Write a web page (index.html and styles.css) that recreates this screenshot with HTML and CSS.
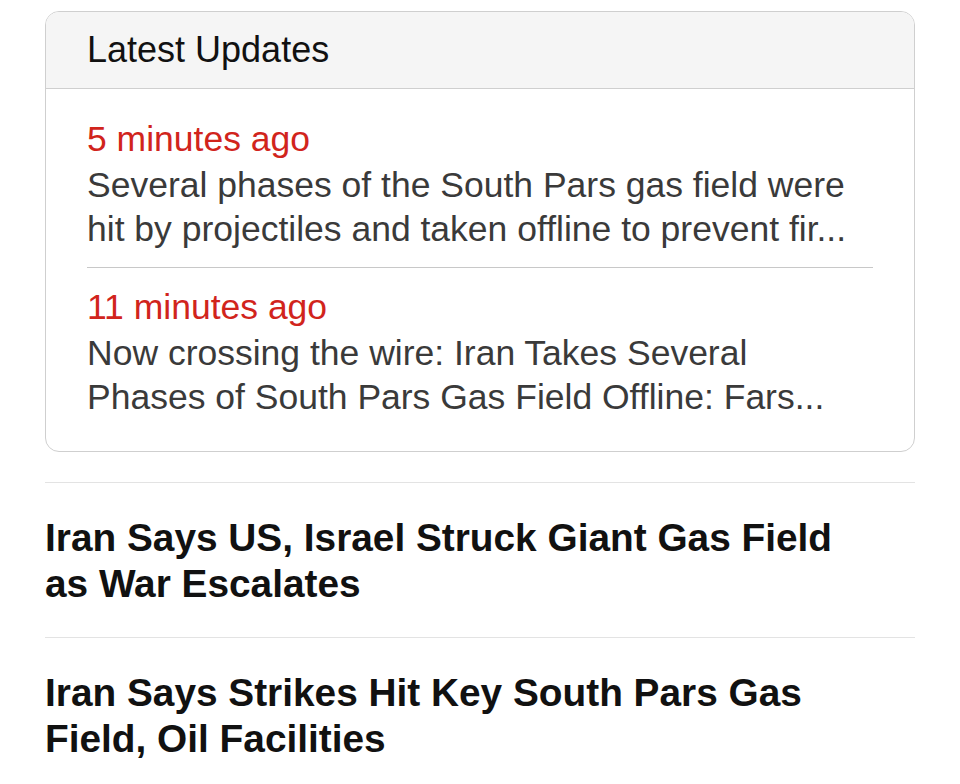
FILE: index.html
```html
<!DOCTYPE html>
<html lang="en">
<head>
<meta charset="utf-8">
<title>Latest Updates</title>
<link rel="stylesheet" href="styles.css">
</head>
<body>
<main class="page">
  <section class="card">
    <header class="card-head">Latest Updates</header>
    <ul class="updates">
      <li class="update">
        <div class="time">5 minutes ago</div>
        <p class="summary">Several phases of the South Pars gas field were hit by projectiles and taken offline to prevent fir...</p>
      </li>
      <li class="update">
        <div class="time">11 minutes ago</div>
        <p class="summary">Now crossing the wire: Iran Takes Several Phases of South Pars Gas Field Offline: Fars...</p>
      </li>
    </ul>
  </section>
  <article class="story">
    <h2 class="headline">Iran Says US, Israel Struck Giant Gas Field as War Escalates</h2>
  </article>
  <article class="story">
    <h2 class="headline">Iran Says Strikes Hit Key South Pars Gas Field, Oil Facilities</h2>
  </article>
</main>
</body>
</html>
```
FILE: styles.css
```css
html, body {
  margin: 0;
  padding: 0;
  background: #ffffff;
}
body {
  font-family: "Liberation Sans", Arial, Helvetica, sans-serif;
  -webkit-font-smoothing: antialiased;
}
.page {
  padding: 11px 45px 0 45px;
}
.card {
  border: 1px solid #cfcfcf;
  border-radius: 14px;
  overflow: hidden;
  background: #fff;
}
.card-head {
  background: #f5f5f5;
  border-bottom: 1px solid #cfcfcf;
  padding: 16px 41px;
  font-size: 36px;
  line-height: 44px;
  color: #111;
}
.updates {
  list-style: none;
  margin: 0;
  padding: 11px 41px 16px 41px;
}
.update {
  padding: 16px 0;
}
.update + .update {
  border-top: 1px solid #c8c8c8;
}
.time {
  font-size: 35.5px;
  line-height: 47px;
  color: #d1241c;
}
.summary {
  margin: 0;
  font-size: 35.5px;
  line-height: 44px;
  color: #3a3a3a;
}
.story {
  margin-top: 30px;
  border-top: 1px solid #e3e3e3;
  padding: 32px 0 30px 0;
}
.story + .story {
  margin-top: 0;
}
.headline {
  margin: 0;
  font-size: 38.8px;
  line-height: 46px;
  font-weight: 700;
  color: #111;
  padding-right: 60px;
}
```
